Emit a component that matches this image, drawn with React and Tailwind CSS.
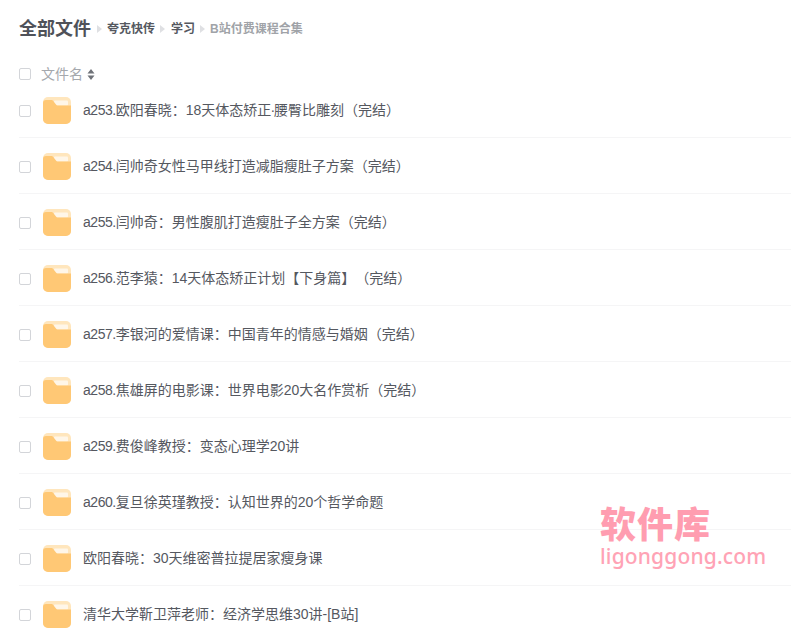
const rows = [
  ["a253.", <>欧阳春晓：18天体态矫正<span className="-mx-px">·</span>腰臀比雕刻（完结）</>],
  ["a254.", "闫帅奇女性马甲线打造减脂瘦肚子方案（完结）"],
  ["a255.", "闫帅奇：男性腹肌打造瘦肚子全方案（完结）"],
  ["a256.", "范李猿：14天体态矫正计划【下身篇】（完结）"],
  ["a257.", "李银河的爱情课：中国青年的情感与婚姻（完结）"],
  ["a258.", "焦雄屏的电影课：世界电影20大名作赏析（完结）"],
  ["a259.", "费俊峰教授：变态心理学20讲"],
  ["a260.", "复旦徐英瑾教授：认知世界的20个哲学命题"],
  ["", "欧阳春晓：30天维密普拉提居家瘦身课"],
  ["", "清华大学靳卫萍老师：经济学思维30讲-[B站]"],
];

function Folder() {
  return (
    <svg width="28" height="27" viewBox="0 0 28 27" className="block shrink-0">
      <rect x="0" y="0" width="28" height="27" rx="5" fill="#ffe6bd" />
      <rect x="11" y="3.500" width="14" height="5" rx="1" fill="#fff6e8" />
      <path d="M0 6a3 3 0 0 1 3-3h5c1.500 0 2 .5 3 2l2 2.500c.5.8 1 1 2 1h13v13.500a5 5 0 0 1-5 5H5a5 5 0 0 1-5-5z" fill="#ffc875" />
    </svg>
  );
}

function Sep({ className = "mx-[5px]" }) {
  return (
    <svg width="5" height="8" viewBox="0 0 5 8" className={`${className} shrink-0`}>
      <path d="M0 0l5 4-5 4z" fill="#dfe0e3" />
    </svg>
  );
}

function Check() {
  return <span className="block w-3 h-3 shrink-0 rounded-[2px] border border-[#d3d5d9] bg-white" />;
}

export default function App() {
  return (
    <div className="relative w-[791px] h-[636px] overflow-hidden bg-white pl-[19px] text-[#4c5057] [text-spacing-trim:space-all]" style={{ fontFamily: '"Liberation Sans", Arial, "Noto Sans CJK SC", sans-serif' }}>
      <div className="flex items-center h-[20px] mt-[19px]">
        <span className="text-[18px] leading-[20px] font-bold text-[#4f5259]">全部文件</span>
        <span className="w-px" />
        <Sep />
        <span className="text-[12px] font-bold text-[#55585f]">夸克快传</span>
        <Sep className="ml-[5px] mr-[6px]" />
        <span className="text-[12px] font-bold text-[#55585f]">学习</span>
        <Sep />
        <span className="text-[12px] font-bold text-[#a0a3a8]">B站付费课程合集</span>
      </div>
      <div className="flex items-center h-[20px] mt-[25px]">
        <Check />
        <span className="ml-[10px] text-[14px] text-[#a5a8ad]">文件名</span>
        <svg width="8" height="11" viewBox="0 0 8 11" className="ml-[4px]">
          <path d="M4 0l3.500 4.500h-7zM4 11L.5 6.500h7z" fill="#6f7278" />
        </svg>
      </div>
      <div className="-mt-[2px]">
        {rows.map(([prefix, rest], i) => (
          <div key={i} className="flex items-center h-[56px] pt-[2px] w-[772px] border-b border-[#f5f5f6]">
            <Check />
            <span className="ml-3 block"><Folder /></span>
            <span className="ml-3 text-[14px] text-[#55585f] whitespace-nowrap">
              {prefix && <span className="tracking-[-0.45px]">{prefix}</span>}
              {rest}
            </span>
          </div>
        ))}
      </div>
      <div className="absolute left-[600px] top-[502px] flex flex-col items-start">
        <span className="text-[36px] leading-[40px] font-black text-[#ff9db0] tracking-[1px]" style={{ fontFamily: '"Noto Sans CJK SC", sans-serif' }}>软件库</span>
        <span className="text-[21px] leading-[28px] font-medium tracking-[0.15px] text-[#ffa3b5]" style={{ fontFamily: '"Noto Sans", sans-serif' }}>ligonggong.com</span>
      </div>
    </div>
  );
}
